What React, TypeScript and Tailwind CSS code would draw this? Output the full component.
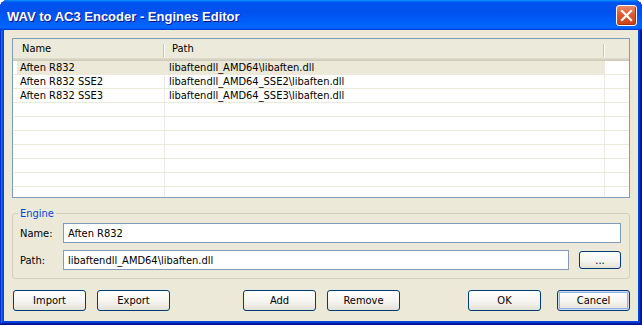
import React from 'react';

const rows = [
  { name: 'Aften R832', path: 'libaftendll_AMD64\\libaften.dll' },
  { name: 'Aften R832 SSE2', path: 'libaftendll_AMD64_SSE2\\libaften.dll' },
  { name: 'Aften R832 SSE3', path: 'libaftendll_AMD64_SSE3\\libaften.dll' },
];

// empty rows fill the rest of the list
const listRows = [...rows, ...Array.from({ length: 7 }, () => ({ name: '', path: '' }))];

function XpButton({
  label,
  className = '',
  focused = false,
}: {
  label: string;
  className?: string;
  focused?: boolean;
}) {
  return (
    <button
      className={`flex items-center justify-center rounded-[3px] border border-[#003c74] bg-[linear-gradient(to_bottom,#ffffff,#f5f4ef_55%,#e4e1d6)] text-[11px] leading-[13px] text-black ${
        focused ? 'shadow-[inset_0_0_0_1px_#cddcf5,inset_0_0_0_2px_#8fb0e8]' : ''
      } ${className}`}
    >
      {label}
    </button>
  );
}

export default function App() {
  return (
    <div className="h-[325px] w-[642px] bg-white font-['DejaVu_Sans_Condensed','Liberation_Sans',sans-serif] text-black">
      <div className="flex h-full flex-col rounded-t-[8px] bg-[#0842d8] shadow-[inset_-1px_-1px_#00138c,inset_1px_1px_#0831d9,inset_-2px_-2px_#001ea0,inset_2px_2px_#166aee,inset_-3px_-3px_#003bda,inset_3px_3px_#0855dd]">
        {/* title bar */}
        <div className="flex h-[30px] shrink-0 items-start justify-between rounded-t-[8px] bg-[linear-gradient(180deg,#0997ff,#0053ee_8%,#0050ee_40%,#0066ff_88%,#0066ff_93%,#005bff_95%,#003dd7_96%,#003dd7)] pl-[7px] pr-[5px]">
          <span className="mt-[9px] font-['Liberation_Sans',sans-serif] text-[13px] font-bold leading-[15px] text-white [text-shadow:1px_1px_#0f1089]">
            WAV to AC3 Encoder - Engines Editor
          </span>
          <div className="mt-[5px] flex h-[21px] w-[21px] items-center justify-center rounded-[3px] border border-white bg-[linear-gradient(to_bottom,#e98a6b,#dc5a32_45%,#c8411b)] shadow-[inset_-1px_-1px_#a83210]">
            <svg width="13" height="13" viewBox="0 0 13 13">
              <path d="M2 2 L11 11 M11 2 L2 11" stroke="white" strokeWidth="2.2" strokeLinecap="square" />
            </svg>
          </div>
        </div>

        {/* dialog body */}
        <div className="mx-[4px] mb-[4px] flex flex-1 flex-col bg-[#ece9d8] px-[8px] pt-[8px]">
          {/* list view */}
          <div className="h-[160px] shrink-0 overflow-hidden border border-[#7f9db9] bg-white text-[11px]">
            <div className="flex h-[19px] items-center bg-[#ebeadb]">
              <div className="w-[150px] pl-[9px] leading-[13px]">Name</div>
              <div className="mb-[1px] h-[13px] w-[2px] self-end border-l border-r border-l-[#c7c5b2] border-r-white" />
              <div className="w-[438px] pl-[7px] leading-[13px]">Path</div>
              <div className="mb-[1px] h-[13px] w-[2px] self-end border-l border-r border-l-[#c7c5b2] border-r-white" />
              <div className="flex-1" />
            </div>
            <div className="h-[3px] bg-[linear-gradient(to_bottom,#e2decd,#d6d2c2,#cbc7b8)]" />
            {listRows.map((r, i) => (
              <div key={i} className="flex h-[14px] border-b border-[#edeadb] leading-[13px]">
                <div className="w-[152px] border-r border-[#edeadb] pl-[4px]">
                  <div className={`h-full pl-[3px] ${i === 0 ? 'bg-[#ece9d8]' : ''}`}>{r.name}</div>
                </div>
                <div className={`w-[440px] border-r border-[#edeadb] pl-[4px] ${i === 0 ? 'bg-[#ece9d8]' : ''}`}>
                  {r.path}
                </div>
                <div className="flex-1" />
              </div>
            ))}
          </div>

          {/* engine group */}
          <fieldset className="mt-[9px] rounded-[3px] border border-[#d0d0bf] pb-[8px] pl-[7px] pr-[8px] text-[11px]">
            <legend className="ml-[-2px] px-[2px] leading-[13px] text-[#0046d5]">Engine</legend>
            <div className="mt-[3px] flex items-center">
              <label className="w-[43px] leading-[13px]">Name:</label>
              <input
                defaultValue="Aften R832"
                className="h-[20px] min-w-0 flex-1 border border-[#7f9db9] bg-white px-[4px] text-[11px] outline-none"
              />
            </div>
            <div className="mt-[7px] flex items-center">
              <label className="w-[43px] leading-[13px]">Path:</label>
              <input
                defaultValue="libaftendll_AMD64\libaften.dll"
                className="h-[20px] min-w-0 flex-1 border border-[#7f9db9] bg-white px-[4px] text-[11px] outline-none"
              />
              <XpButton label="..." className="ml-[10px] h-[18px] w-[42px]" />
            </div>
          </fieldset>

          {/* buttons */}
          <div className="mt-[11px] flex pl-[1px]">
            <XpButton label="Import" className="h-[21px] w-[73px]" />
            <XpButton label="Export" className="ml-[11px] h-[21px] w-[73px]" />
            <XpButton label="Add" className="ml-[73px] h-[21px] w-[73px]" />
            <XpButton label="Remove" className="ml-[11px] h-[21px] w-[73px]" />
            <XpButton label="OK" className="ml-[68px] h-[21px] w-[73px]" />
            <XpButton label="Cancel" className="ml-[16px] h-[21px] w-[73px]" focused />
          </div>
        </div>
      </div>
    </div>
  );
}
